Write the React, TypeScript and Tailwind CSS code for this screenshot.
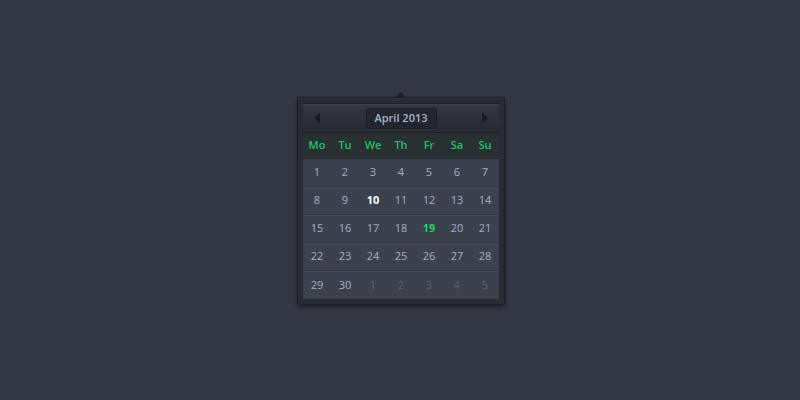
import React from "react";

const days = ["Mo", "Tu", "We", "Th", "Fr", "Sa", "Su"];

type Cell = { n: number; muted?: boolean; today?: boolean; marked?: boolean };

const weeks: Cell[][] = [
  [1, 2, 3, 4, 5, 6, 7].map((n) => ({ n })),
  [8, 9, 10, 11, 12, 13, 14].map((n) => ({ n, today: n === 10 })),
  [15, 16, 17, 18, 19, 20, 21].map((n) => ({ n, marked: n === 19 })),
  [22, 23, 24, 25, 26, 27, 28].map((n) => ({ n })),
  [
    { n: 29 },
    { n: 30 },
    { n: 1, muted: true },
    { n: 2, muted: true },
    { n: 3, muted: true },
    { n: 4, muted: true },
    { n: 5, muted: true },
  ],
];

function Arrow({ dir }: { dir: "left" | "right" }) {
  return (
    <svg width="6" height="10" viewBox="0 0 6 10">
      {dir === "left" ? (
        <polygon points="6,0 0,5 6,10" fill="#16191d" />
      ) : (
        <polygon points="0,0 6,5 0,10" fill="#16191d" />
      )}
    </svg>
  );
}

export default function App() {
  return (
    <div
      className="w-[800px] h-[400px] bg-[#323844] flex items-start justify-center pt-[97px]"
      style={{ fontFamily: '"Open Sans", "Noto Sans", sans-serif' }}
    >
      <div className="relative ml-[2px]">
        {/* pointer notch above the box */}
        <div className="absolute left-[99px] -top-[5px] w-0 h-0 border-l-[5px] border-r-[5px] border-b-[5px] border-l-transparent border-r-transparent border-b-[#1c1f24]" />
        <div className="w-[208px] border border-[#1a1d22] bg-[#282c33] rounded-[2px] p-[5px] shadow-[0_3px_4px_rgba(0,0,0,0.35),inset_0_1px_0_rgba(255,255,255,0.05)]">
          <div className="border-t border-[#1c1f24]">
            {/* month header */}
            <div className="h-[28px] bg-gradient-to-b from-[#333941] to-[#262a31] flex items-center shadow-[inset_0_1px_0_rgba(255,255,255,0.06)]">
              <div className="w-[28px] flex justify-center">
                <Arrow dir="left" />
              </div>
              <div className="flex-1 flex justify-center">
                <div className="h-[21px] w-[71px] rounded-[3px] bg-[#23272d] border border-[#1b1e23] shadow-[0_1px_0_rgba(255,255,255,0.06)] flex items-center justify-center text-[11px] font-semibold text-[#a8b3cb]">
                  April 2013
                </div>
              </div>
              <div className="w-[28px] flex justify-center">
                <Arrow dir="right" />
              </div>
            </div>
            {/* weekday names */}
            <div className="h-[27px] bg-[#293032] border-t border-[#1e2226] border-b border-b-[#23282c] grid grid-cols-7 items-center">
              {days.map((d) => (
                <div key={d} className="text-center text-[11px] font-semibold text-[#20c462]">
                  {d}
                </div>
              ))}
            </div>
            {/* dates */}
            <div className="bg-[#3b424d]">
              {weeks.map((w, i) => (
                <div
                  key={i}
                  className={
                    "h-[28px] grid grid-cols-7 items-center " +
                    (i < weeks.length - 1 ? "border-b border-[#2f343c] shadow-[0_1px_0_#474d58]" : "")
                  }
                >
                  {w.map((c, j) => (
                    <div
                      key={j}
                      className={
                        "text-center text-[11px] " +
                        (c.today
                          ? "text-white font-bold"
                          : c.marked
                          ? "text-[#22d466] font-bold"
                          : c.muted
                          ? "text-[#5d6675]"
                          : "text-[#a4afc3]")
                      }
                    >
                      {c.n}
                    </div>
                  ))}
                </div>
              ))}
            </div>
          </div>
        </div>
      </div>
    </div>
  );
}
